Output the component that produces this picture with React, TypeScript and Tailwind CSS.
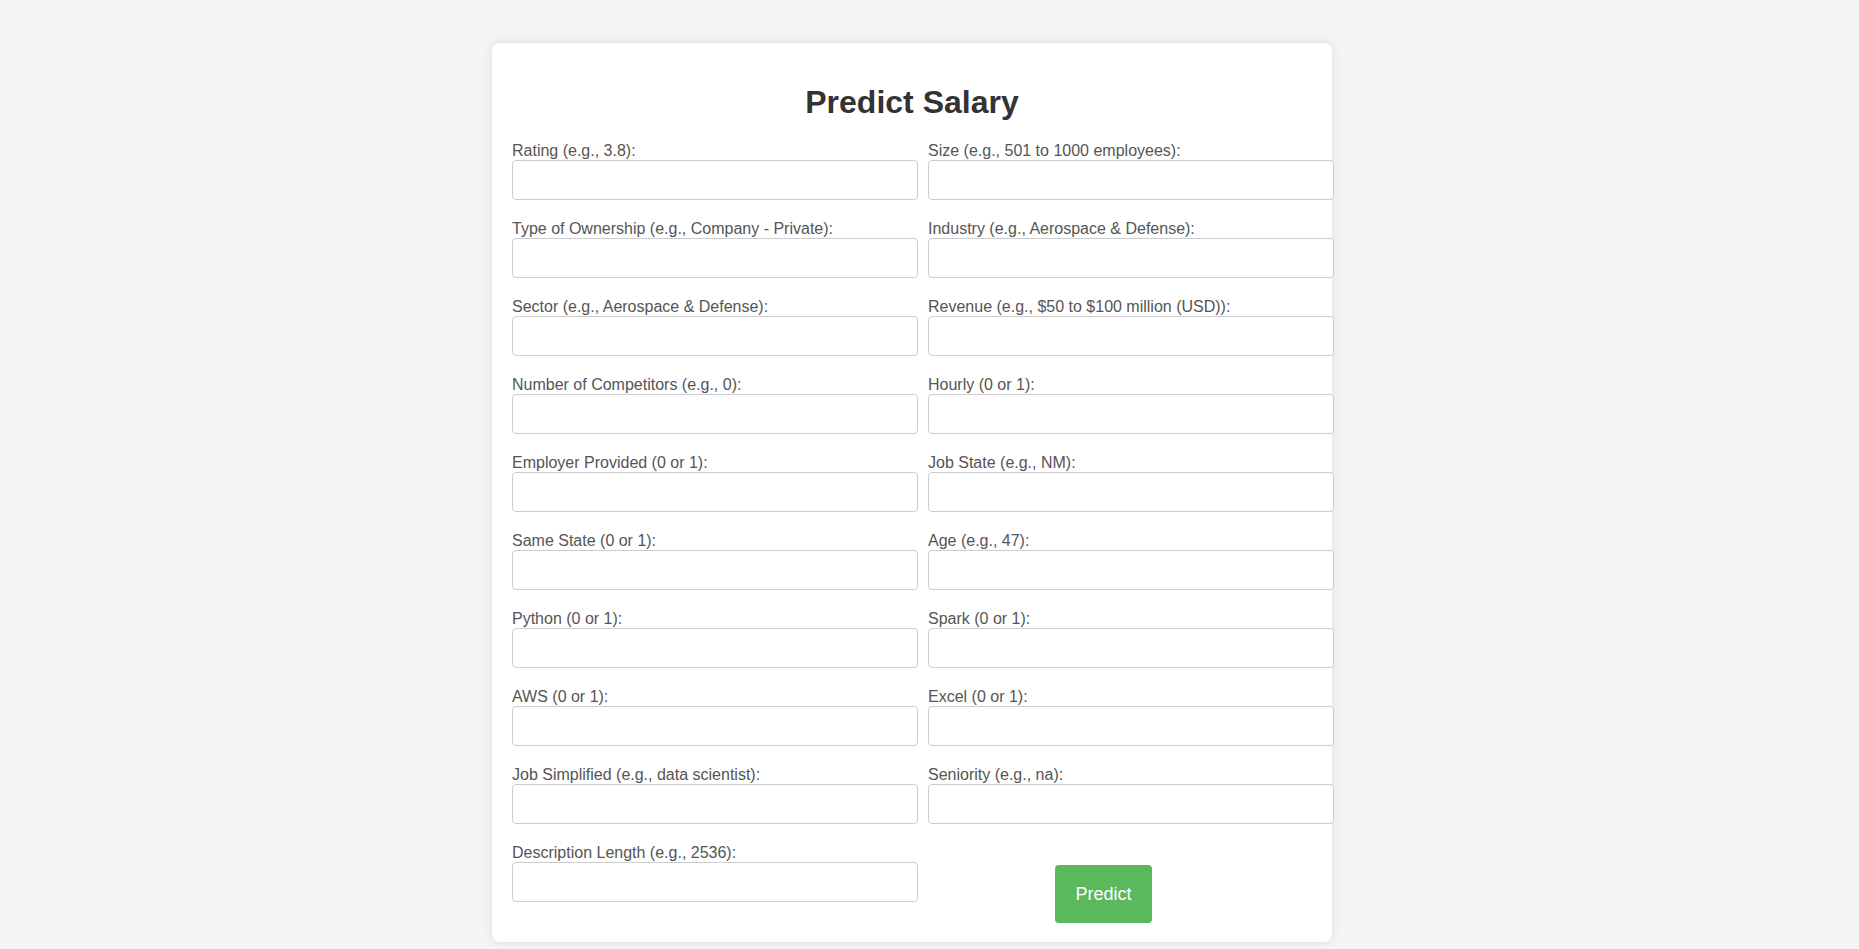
const fields: string[] = [
  "Rating (e.g., 3.8):",
  "Size (e.g., 501 to 1000 employees):",
  "Type of Ownership (e.g., Company - Private):",
  "Industry (e.g., Aerospace & Defense):",
  "Sector (e.g., Aerospace & Defense):",
  "Revenue (e.g., $50 to $100 million (USD)):",
  "Number of Competitors (e.g., 0):",
  "Hourly (0 or 1):",
  "Employer Provided (0 or 1):",
  "Job State (e.g., NM):",
  "Same State (0 or 1):",
  "Age (e.g., 47):",
  "Python (0 or 1):",
  "Spark (0 or 1):",
  "AWS (0 or 1):",
  "Excel (0 or 1):",
  "Job Simplified (e.g., data scientist):",
  "Seniority (e.g., na):",
  "Description Length (e.g., 2536):",
];

function Field({ label }: { label: string }) {
  return (
    <div className="mb-[20px]">
      <label className="block text-[16px] leading-[18px] text-[#555]">{label}</label>
      <input type="text" className="block w-[406px] h-[40px] px-[10px] bg-white border border-[#ccc] rounded-[4px] outline-none" />
    </div>
  );
}

export default function App() {
  return (
    <div className="min-h-[997px] bg-[#f4f4f4] pt-[43px] pb-[55px] pr-[35px] font-['Liberation_Sans',Arial,sans-serif]">
      <div className="w-[840px] mx-auto px-[20px] pt-[20px] pb-[19px] bg-white rounded-[8px] shadow-[0_0_10px_rgba(0,0,0,0.1)]">
        <h1 className="text-center text-[32px] leading-[37px] font-bold text-[#333] mt-[21px] mb-[21px]">Predict Salary</h1>
        <div className="grid grid-cols-[406px_406px] gap-x-[10px]">
          {fields.map((f) => (
            <Field key={f} label={f} />
          ))}
          <div>
            <button className="ml-[127px] mt-[21px] w-[97px] h-[58px] bg-[#5cb85c] text-white text-[18px] rounded-[4px]">
              Predict
            </button>
          </div>
        </div>
      </div>
    </div>
  );
}
